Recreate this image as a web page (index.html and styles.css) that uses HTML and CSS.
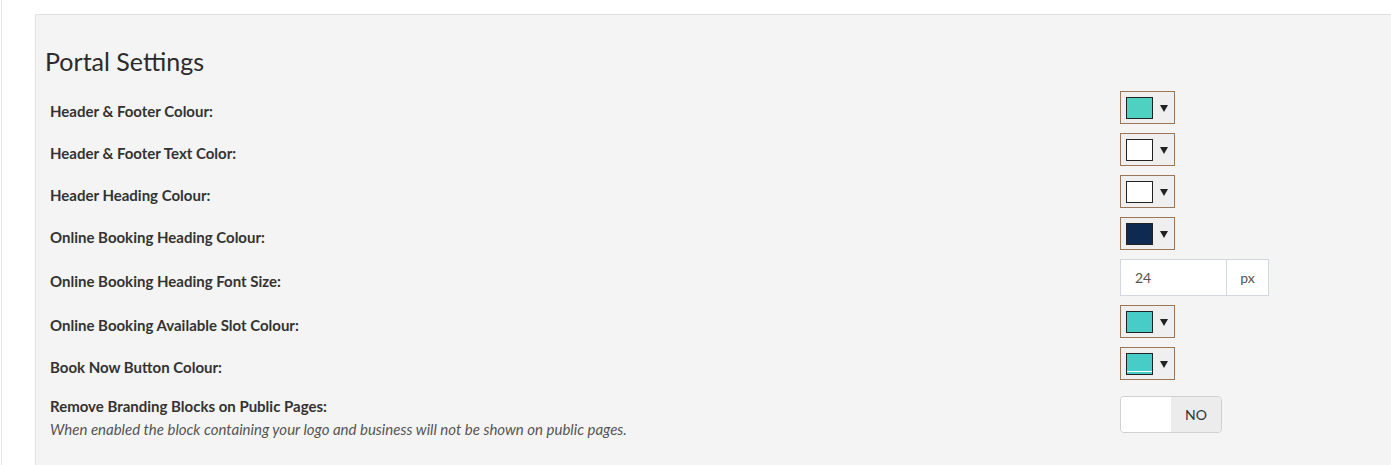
FILE: index.html
```html
<!DOCTYPE html>
<html lang="en">
<head>
    <meta charset="UTF-8">
    <meta name="viewport" content="width=device-width, initial-scale=1.0">
    <title>Portal Settings</title>
    <link rel="stylesheet" href="styles.css">
</head>
<body>

<div class="page">
    <div class="panel">
        <h2 class="panel-title">Portal Settings</h2>

        <div class="form-row">
            <label class="field-label">Header &amp; Footer Colour:</label>
            <div class="color-picker"><span class="swatch swatch-teal"></span><span class="caret"></span></div>
        </div>

        <div class="form-row">
            <label class="field-label">Header &amp; Footer Text Color:</label>
            <div class="color-picker"><span class="swatch swatch-white"></span><span class="caret"></span></div>
        </div>

        <div class="form-row">
            <label class="field-label">Header Heading Colour:</label>
            <div class="color-picker"><span class="swatch swatch-white"></span><span class="caret"></span></div>
        </div>

        <div class="form-row">
            <label class="field-label">Online Booking Heading Colour:</label>
            <div class="color-picker"><span class="swatch swatch-navy"></span><span class="caret"></span></div>
        </div>

        <div class="form-row">
            <label class="field-label">Online Booking Heading Font Size:</label>
            <div class="input-group">
                <input class="input-field" type="text" value="24">
                <span class="input-addon">px</span>
            </div>
        </div>

        <div class="form-row">
            <label class="field-label">Online Booking Available Slot Colour:</label>
            <div class="color-picker"><span class="swatch swatch-aqua"></span><span class="caret"></span></div>
        </div>

        <div class="form-row">
            <label class="field-label">Book Now Button Colour:</label>
            <div class="color-picker"><span class="swatch swatch-aqua swatch-marked"></span><span class="caret"></span></div>
        </div>

        <div class="form-row">
            <div class="field-label">
                <label>Remove Branding Blocks on Public Pages:</label>
                <p class="field-help">When enabled the block containing your logo and business will not be shown on public pages.</p>
            </div>
            <div class="toggle">
                <span class="toggle-off"></span>
                <span class="toggle-state">NO</span>
            </div>
        </div>
    </div>
</div>

</body>
</html>
```

FILE: styles.css
```css
html, body {
    height: 100%;
}
body {
    font-family: Lato, "Open Sans", sans-serif;
    background-color: #ffffff;
    color: #333;
    margin: 0;
    padding: 0;
    overflow: hidden;
}

.page {
    margin-left: 1px;
    border-left: 1px solid #e6e6e6;
    padding: 14px 0 0 33px;
    height: 100%;
    box-sizing: border-box;
}

.panel {
    background-color: #f4f4f4;
    border-top: 1px solid #e0e0e0;
    border-left: 1px solid #e3e3e3;
    box-shadow: 0 1px 1px rgba(0, 0, 0, 0.04);
    padding: 31px 0 0 14px;
    height: 100%;
    box-sizing: border-box;
}

.panel-title {
    font-size: 25px;
    font-weight: 400;
    line-height: 31px;
    color: #2b2b2b;
    margin: 0 0 14px -5px;
}

/* form rows */
.form-row {
    display: grid;
    grid-template-columns: 1070px auto;
    align-items: center;
    margin-bottom: 9px;
}
.field-label {
    font-size: 15px;
    font-weight: 700;
    line-height: 20px;
    color: #333;
    padding-top: 7px;
}
.field-help {
    margin: 3px 0 0;
    font-size: 15px;
    font-weight: 400;
    font-style: italic;
    color: #555;
    line-height: 20px;
}

/* colour picker */
.color-picker {
    width: 55px;
    height: 33px;
    box-sizing: border-box;
    border: 1px solid #9b7657;
    background-color: #efefef;
    display: flex;
    align-items: center;
    padding-left: 5px;
}
.swatch {
    width: 27px;
    height: 22px;
    box-sizing: border-box;
    border: 1px solid #222;
    margin-right: 7px;
}
.swatch-teal {
    background-color: #4fd1c1;
}
.swatch-white {
    background-color: #ffffff;
}
.swatch-navy {
    background-color: #0e2a52;
}
.swatch-aqua {
    background-color: #48ccc7;
}
.swatch-marked {
    box-shadow: inset 0 -2px 0 #48ccc7, inset 0 -3px 0 #ffffff;
}
.caret {
    width: 0;
    height: 0;
    border-left: 4px solid transparent;
    border-right: 4px solid transparent;
    border-top: 7px solid #222;
    margin-top: 1px;
}

/* font size input */
.input-group {
    display: flex;
    width: 149px;
    height: 37px;
}
.input-field {
    width: 107px;
    box-sizing: border-box;
    border: 1px solid #d2d6de;
    background-color: #fff;
    font-family: Lato, "Open Sans", sans-serif;
    font-size: 14px;
    color: #555;
    padding: 0 14px;
    margin: 0;
    outline: none;
}
.input-addon {
    width: 42px;
    box-sizing: border-box;
    border: 1px solid #d2d6de;
    border-left: none;
    background-color: #fff;
    font-size: 14px;
    color: #555;
    display: flex;
    align-items: center;
    justify-content: center;
}

/* toggle */
.toggle {
    display: flex;
    width: 102px;
    height: 37px;
    box-sizing: border-box;
    border: 1px solid #d0d0d0;
    border-radius: 4px;
    overflow: hidden;
}
.toggle-off {
    width: 50px;
    background-color: #fff;
}
.toggle-state {
    flex: 1;
    background-color: #ececec;
    font-size: 14px;
    color: #333;
    display: flex;
    align-items: center;
    justify-content: center;
}
```
